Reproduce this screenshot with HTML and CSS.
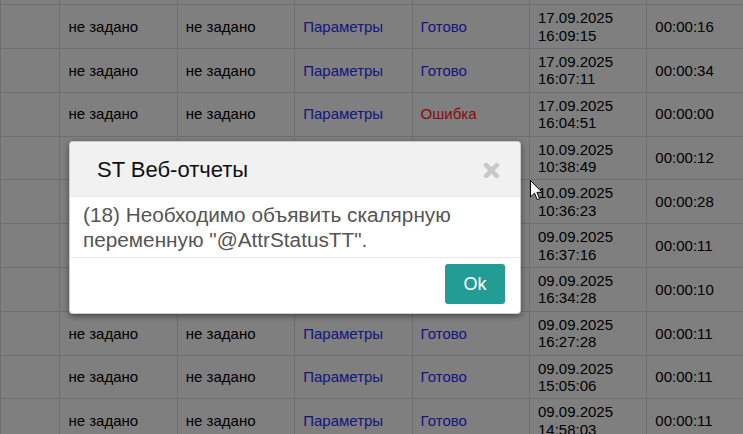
FILE: index.html
```html
<!DOCTYPE html>
<html lang="ru">
<head>
<meta charset="utf-8">
<title>ST Веб-отчеты</title>
<link rel="stylesheet" href="styles.css">
</head>
<body>
<div class="page">
  <table class="grid">
    <colgroup>
      <col class="c-first"><col class="c"><col class="c"><col class="c"><col class="c"><col class="c"><col class="c">
    </colgroup>
    <tbody>
      <tr><td></td><td>не задано</td><td>не задано</td><td><a class="link">Параметры</a></td><td><a class="link">Готово</a></td><td>17.09.2025<br>16:12:40</td><td>00:00:15</td></tr>
      <tr><td></td><td>не задано</td><td>не задано</td><td><a class="link">Параметры</a></td><td><a class="link">Готово</a></td><td>17.09.2025<br>16:09:15</td><td>00:00:16</td></tr>
      <tr><td></td><td>не задано</td><td>не задано</td><td><a class="link">Параметры</a></td><td><a class="link">Готово</a></td><td>17.09.2025<br>16:07:11</td><td>00:00:34</td></tr>
      <tr><td></td><td>не задано</td><td>не задано</td><td><a class="link">Параметры</a></td><td><a class="err">Ошибка</a></td><td>17.09.2025<br>16:04:51</td><td>00:00:00</td></tr>
      <tr><td></td><td class="warn">Ожидание</td><td>не задано</td><td><a class="link">Параметры</a></td><td><a class="link">Готово</a></td><td>10.09.2025<br>10:38:49</td><td>00:00:12</td></tr>
      <tr><td></td><td class="warn">Ожидание</td><td>не задано</td><td><a class="link">Параметры</a></td><td><a class="link">Готово</a></td><td>10.09.2025<br>10:36:23</td><td>00:00:28</td></tr>
      <tr><td></td><td class="warn">Ожидание</td><td>не задано</td><td><a class="link">Параметры</a></td><td><a class="link">Готово</a></td><td>09.09.2025<br>16:37:16</td><td>00:00:11</td></tr>
      <tr><td></td><td class="warn">Ожидание</td><td>не задано</td><td><a class="link">Параметры</a></td><td><a class="link">Готово</a></td><td>09.09.2025<br>16:34:28</td><td>00:00:10</td></tr>
      <tr><td></td><td>не задано</td><td>не задано</td><td><a class="link">Параметры</a></td><td><a class="link">Готово</a></td><td>09.09.2025<br>16:27:28</td><td>00:00:11</td></tr>
      <tr><td></td><td>не задано</td><td>не задано</td><td><a class="link">Параметры</a></td><td><a class="link">Готово</a></td><td>09.09.2025<br>15:05:06</td><td>00:00:11</td></tr>
      <tr><td></td><td>не задано</td><td>не задано</td><td><a class="link">Параметры</a></td><td><a class="link">Готово</a></td><td>09.09.2025<br>14:58:03</td><td>00:00:11</td></tr>
    </tbody>
  </table>

  <div class="backdrop"></div>

  <div class="modal" role="dialog">
    <div class="modal-header">
      <h4 class="modal-title">ST Веб-отчеты</h4>
      <span class="close" aria-label="Закрыть">
        <svg width="17" height="17" viewBox="0 0 16 16"><path d="M3 3 L13 13 M13 3 L3 13" stroke="#c8c8c8" stroke-width="4.4" stroke-linecap="round"/></svg>
      </span>
    </div>
    <div class="modal-body">(18) Необходимо объявить скалярную переменную "@AttrStatusTT".</div>
    <div class="modal-footer">
      <button class="btn-ok">Ok</button>
    </div>
  </div>

  <svg class="cursor" width="13" height="21" viewBox="0 0 13 21"><path d="M0.5 0.5 L0.5 17 L4.5 13.2 L7.3 19.6 L9.6 18.6 L6.9 12.3 L12 12.3 Z" fill="#fff" stroke="#000" stroke-width="1" stroke-linejoin="miter"/></svg>
</div>
</body>
</html>
```

FILE: styles.css
```css
html, body {
  margin: 0;
  padding: 0;
}
body {
  width: 743px;
  height: 434px;
  overflow: hidden;
  background: #fff;
  font-family: "Liberation Sans", Arial, sans-serif;
}
.page {
  position: relative;
  width: 743px;
  height: 434px;
  overflow: hidden;
}
.grid {
  border-collapse: collapse;
  table-layout: fixed;
  width: 764px;
  margin-top: -39.7px;
  background: #fff;
  font-size: 15px;
  color: #000;
}
.c-first { width: 59.4px; }
.c { width: 117.4px; }
.grid td {
  border: 1px solid #dcdcdc;
  padding: 4px 8px;
  line-height: 17.4px;
  height: 34.8px;
  vertical-align: middle;
  white-space: nowrap;
  overflow: hidden;
}
.link { color: #2c2cff; }
.err { color: #ff2020; }
.warn { color: #e07a00; }

.backdrop {
  position: absolute;
  inset: 0;
  background: rgba(0, 0, 0, 0.5);
}
.modal {
  position: absolute;
  left: 69px;
  top: 141px;
  width: 450px;
  background: #fff;
  border: 1px solid rgba(0, 0, 0, 0.2);
  border-radius: 4px;
  box-shadow: 0 2px 6px rgba(0, 0, 0, 0.45);
  overflow: hidden;
}
.modal-header {
  display: flex;
  align-items: center;
  justify-content: space-between;
  height: 54px;
  padding: 0 20px 0 27px;
  background: #f1f1f1;
  border-bottom: 1px solid #e8e8e8;
}
.modal-title {
  margin: 0;
  font-size: 22px;
  font-weight: normal;
  color: #111;
  padding-top: 2px;
}
.close {
  display: flex;
  width: 17px;
  height: 17px;
  margin-top: 2px;
}
.modal-body {
  padding: 5px 10px 5px 13px;
  font-size: 20.75px;
  line-height: 25px;
  color: #555;
  border-bottom: 1px solid #e8e8e8;
}
.modal-footer {
  display: flex;
  justify-content: flex-end;
  padding: 6px 15px 9px;
}
.btn-ok {
  width: 60px;
  height: 40px;
  border: 0;
  border-radius: 3px;
  background: #229c95;
  color: #fff;
  font-family: "Liberation Sans", Arial, sans-serif;
  font-size: 18px;
  padding: 0;
}
.cursor {
  position: absolute;
  left: 530px;
  top: 180px;
}
```
